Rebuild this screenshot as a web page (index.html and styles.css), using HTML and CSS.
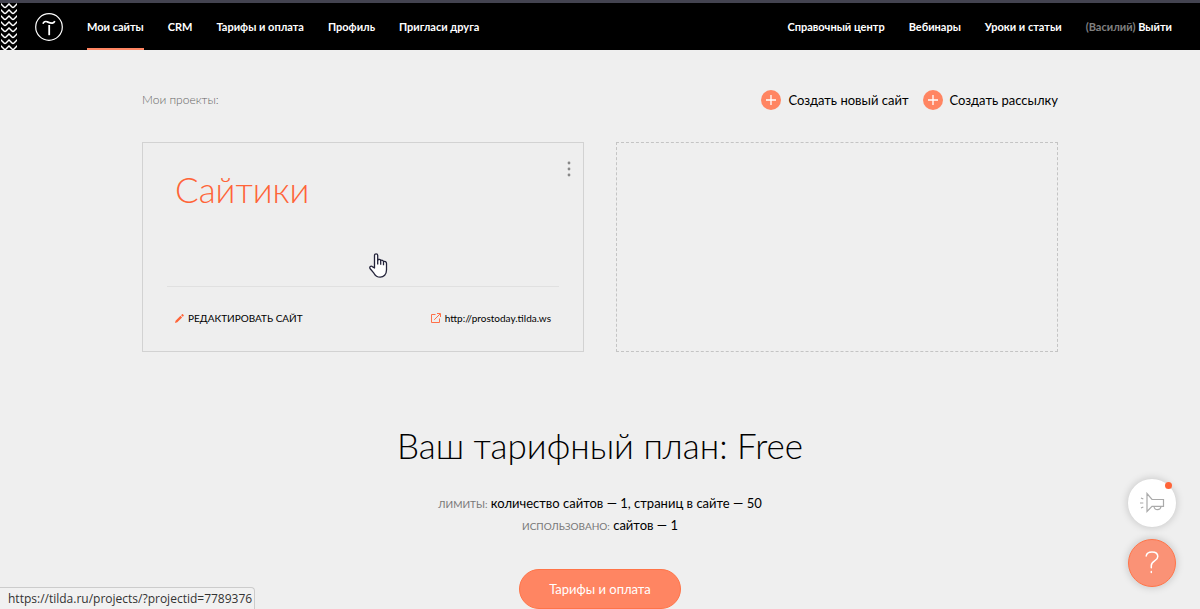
FILE: index.html
```html
<!DOCTYPE html>
<html lang="ru">
<head>
    <meta charset="UTF-8">
    <meta name="viewport" content="width=device-width, initial-scale=1.0">
    <title>Мои сайты</title>
    <link rel="stylesheet" href="styles.css">
</head>
<body>
    <header class="header">
        <svg class="pattern" width="18" height="47" aria-hidden="true">
            <defs>
                <pattern id="waves" x="1" width="8" height="6" patternUnits="userSpaceOnUse">
                    <path d="M-1 0L0 1l3 3q1 1 2 0l3-3 1-1M-1-6L0-5l3 3q1 1 2 0l3-3M-1 6L0 7M9 6L8 7" fill="none" stroke="#fff" stroke-width="1.500"/>
                </pattern>
            </defs>
            <rect x="1" width="16" height="47" fill="url(#waves)"/>
        </svg>
        <a class="logo" href="#" aria-label="Tilda">
            <svg width="28" height="28" viewBox="0 0 28 28" fill="none" stroke="#fff">
                <circle cx="14" cy="14" r="13.300" stroke-width="1.200"/>
                <path d="M8 10.800c.6-1.900 2.300-2.800 4.200-2 1.900.8 3.500 1.500 5.200 1.300 1.200-.1 1.900-.8 2.400-1.900" stroke-width="1.700"/>
                <path d="M14.200 12v10.200" stroke-width="1.800"/>
            </svg>
        </a>
        <nav class="menu">
            <a class="active" href="#">Мои сайты</a>
            <a href="#">CRM</a>
            <a href="#">Тарифы и оплата</a>
            <a href="#">Профиль</a>
            <a href="#">Пригласи друга</a>
        </nav>
        <nav class="menu menu-right">
            <a href="#">Справочный центр</a>
            <a href="#">Вебинары</a>
            <a href="#">Уроки и статьи</a>
            <a href="#"><span class="user">(Василий)</span> Выйти</a>
        </nav>
    </header>

    <main class="container">
        <div class="toolbar">
            <span class="toolbar-title">Мои проекты:</span>
            <div class="actions">
                <button class="create" type="button">
                    <svg width="20" height="20" viewBox="0 0 20 20"><circle cx="10" cy="10" r="10" fill="#ff8562"/><path d="M10 5v10M5 10h10" stroke="#fff" stroke-width="1.300"/></svg>
                    Создать новый сайт
                </button>
                <button class="create" type="button">
                    <svg width="20" height="20" viewBox="0 0 20 20"><circle cx="10" cy="10" r="10" fill="#ff8562"/><path d="M10 5v10M5 10h10" stroke="#fff" stroke-width="1.300"/></svg>
                    Создать рассылку
                </button>
            </div>
        </div>

        <div class="projects">
            <section class="card">
                <div class="card-top">
                    <h2 class="card-title"><a href="#">Сайтики</a></h2>
                    <button class="dots" type="button" aria-label="Меню">
                        <svg width="4" height="16" viewBox="0 0 4 16" fill="#888"><circle cx="2" cy="2" r="1.400"/><circle cx="2" cy="8" r="1.400"/><circle cx="2" cy="14" r="1.400"/></svg>
                    </button>
                </div>
                <div class="card-links">
                    <a class="edit" href="#">
                        <svg width="9" height="9" viewBox="0 0 9 9" fill="#ff6438"><path d="M0 9l.6-2.300L5.500 1.800l1.600 1.600L2.300 8.300zM6.100 1.200l.9-.9c.3-.3.600-.2.800 0l.8.800c.3.300.3.600 0 .8l-.9.900z"/></svg>
                        Редактировать сайт
                    </a>
                    <a class="site" href="#">
                        <svg width="10" height="10" viewBox="0 0 10 10" fill="none" stroke="#ff7048"><path d="M4.500 1.500h-4v8h8v-4M3.200 6.800L9 1M6 .5h3.500V4"/></svg>
                        http://prostoday.tilda.ws
                    </a>
                </div>
                <svg class="cursor" width="19" height="25" viewBox="0 0 19 25" fill="#fff" stroke="#23233a" stroke-width="1.300" stroke-linejoin="round" aria-hidden="true">
                    <path d="M5.500 15V2.500c0-2.200 3.200-2.200 3.200 0V7c.8-1.100 2.700-.8 3 .6.900-.8 2.600-.4 2.800.9 1.300-.5 3 .2 3 1.900V17c0 4.400-2.800 7.200-6.300 7.200-3.300 0-5-1.600-6.300-4L1 15.500c-.8-1.700.9-3 2.300-1.900z"/>
                    <path d="M8.700 7v4.500M11.700 7.600v4.200M14.500 8.600v3.700" fill="none"/>
                </svg>
            </section>
            <div class="card card-empty"></div>
        </div>

        <section class="plan">
            <h1>Ваш тарифный план: Free</h1>
            <p><span class="label">Лимиты:</span> количество сайтов — 1, страниц в сайте — 50</p>
            <p><span class="label">Использовано:</span> сайтов — 1</p>
            <a class="btn" href="#">Тарифы и оплата</a>
        </section>
    </main>

    <div class="widgets">
        <button class="round news" type="button" aria-label="Новости">
            <svg width="25" height="22" viewBox="0 0 25 22" fill="none" stroke="#aaa" stroke-width="1.200">
                <path d="M7 1.500v18l5-5.200h11.500V7.500H12zM14 14.500c.5 4.200 6.500 4.200 7 0M1 6l2.300 1M0 11h3.300M1 16l2.300-1"/>
            </svg>
            <span class="badge"></span>
        </button>
        <button class="round help" type="button" aria-label="Помощь">
            <svg width="14" height="24" viewBox="0 0 14 24" fill="none" stroke="#fff" stroke-width="1.500" stroke-linecap="round">
                <path d="M1.200 5C1.600 2.300 4 1 7 1c3.500 0 5.800 1.700 5.800 4.600 0 4.600-6.500 4.200-6.500 8.900v2.300M6.300 20.600v1"/>
            </svg>
        </button>
    </div>

    <div class="status">https://tilda.ru/projects/?projectid=7789376</div>
</body>
</html>
```

FILE: styles.css
```css
* {
    box-sizing: border-box;
    margin: 0;
    padding: 0;
}
body {
    background-color: #efefef;
    color: #000;
    font-family: Lato, "Open Sans", sans-serif;
    font-size: 13px;
    line-height: 20px;
}
a {
    color: inherit;
    text-decoration: none;
}
button {
    border: none;
    background: none;
    color: inherit;
    font: inherit;
    cursor: pointer;
}
svg {
    display: block;
    flex: none;
}

/* header */
.header {
    display: flex;
    align-items: stretch;
    border-top: 3px solid #434350;
    background-color: #000;
    color: #fff;
    font-size: 11px;
    font-weight: bold;
}
.logo {
    display: flex;
    align-items: center;
    margin: 0 24px 0 17px;
}
.menu {
    display: flex;
    gap: 24px;
}
.menu a {
    padding: 14px 0 11px;
    border-bottom: 2px solid transparent;
    white-space: nowrap;
}
.menu .active {
    border-color: #ff8562;
}
.menu-right {
    margin-left: auto;
    margin-right: 28px;
}
.user {
    color: #808080;
}

/* projects */
.container {
    max-width: 948px;
    margin: 0 auto;
    padding: 40px 16px 0;
}
.toolbar,
.actions,
.create,
.card-top,
.card-links,
.card-links a {
    display: flex;
    align-items: center;
}
.toolbar {
    justify-content: space-between;
}
.toolbar-title {
    color: #666;
    font-size: 12px;
    font-weight: 300;
}
.actions {
    gap: 14px;
}
.create {
    gap: 7px;
}
.projects {
    display: grid;
    grid-template-columns: 1fr 1fr;
    gap: 32px;
    margin-top: 32px;
}
.card {
    position: relative;
    display: flex;
    flex-direction: column;
    justify-content: space-between;
    min-height: 210px;
    padding: 16px 24px 0;
    border: 1px solid #d2d2d2;
    background-color: #eee;
}
.card-empty {
    border: 1px dashed #c4c4c4;
    background: none;
}
.card-top {
    align-items: flex-start;
    justify-content: space-between;
    padding-left: 8px;
}
.card-title {
    color: #ff6438;
    font-size: 35px;
    font-weight: 300;
    line-height: 60px;
}
.dots {
    margin-right: -14px;
    padding: 2px;
}
.card-links {
    justify-content: space-between;
    padding: 21px 8px 23px;
    border-top: 1px solid #e0e0e0;
    font-size: 10px;
}
.card-links a {
    gap: 4px;
}
.edit {
    text-transform: uppercase;
}
.cursor {
    position: absolute;
    left: 226px;
    top: 110px;
}

/* plan */
.plan {
    margin-top: 63px;
    text-align: center;
}
.plan h1 {
    margin-bottom: 18px;
    font-size: 35px;
    font-weight: 300;
    line-height: 60px;
}
.plan p {
    line-height: 21px;
}
.label {
    color: #777;
    font-size: 10px;
    text-transform: uppercase;
}
.btn {
    display: inline-block;
    margin-top: 32px;
    padding: 9px 29px;
    border: 1px solid #ff7448;
    border-radius: 20px;
    background-color: #ff8562;
    color: #fff;
}

/* floating buttons */
.widgets {
    position: fixed;
    right: 24px;
    bottom: 22px;
    display: flex;
    flex-direction: column;
    gap: 12px;
}
.round {
    position: relative;
    display: flex;
    align-items: center;
    justify-content: center;
    width: 48px;
    height: 48px;
    border-radius: 50%;
    box-shadow: 0 0 8px rgba(0, 0, 0, 0.2);
}
.news {
    background-color: #fff;
}
.help {
    border: 1px solid #ff7448;
    background-color: #fa9276;
}
.badge {
    position: absolute;
    top: 3px;
    right: 4px;
    width: 7px;
    height: 7px;
    border-radius: 50%;
    background-color: #ff6438;
}

/* link address */
.status {
    position: fixed;
    left: 0;
    bottom: 0;
    padding: 1px 2px 0 8px;
    border: 1px solid #ccc;
    border-width: 1px 1px 0 0;
    border-radius: 0 4px 0 0;
    background-color: #f1f1f1;
    color: #333;
    font-family: "Open Sans", sans-serif;
    font-size: 12px;
}
```
